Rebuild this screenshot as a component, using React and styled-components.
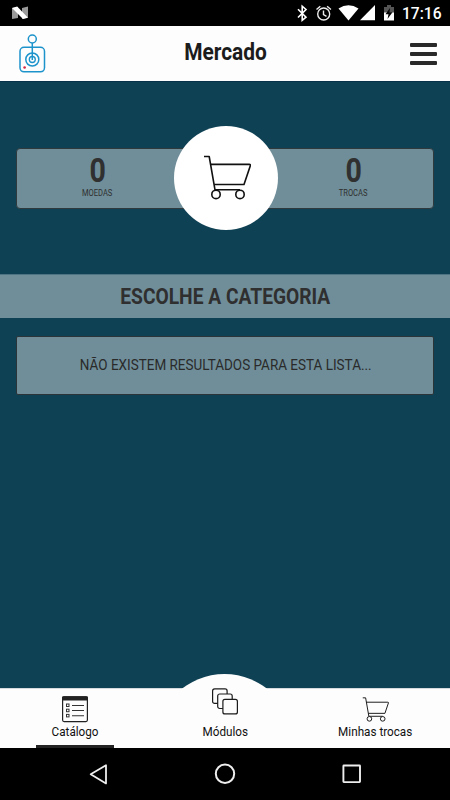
import React from "react";
import styled, { createGlobalStyle } from "styled-components";

const GlobalStyle = createGlobalStyle`
  * {
    box-sizing: border-box;
  }
  body {
    margin: 0;
    background: #0f4154;
    font-family: Roboto, "Liberation Sans", sans-serif;
  }
`;

const App = () => {
  return (
    <>
      <GlobalStyle />
      <Screen>
        <StatusBar>
          <NougatIcon />
          <StatusIcons />
          <Clock>17:16</Clock>
        </StatusBar>
        <Header>
          <LogoBox>
            <Logo />
          </LogoBox>
          <Title>
            <Condensed $scale={0.87}>Mercado</Condensed>
          </Title>
          <MenuButton aria-label="Menu">
            <MenuLine />
            <MenuLine />
            <MenuLine />
          </MenuButton>
        </Header>
        <Content>
          <Summary>
            <Stat>
              <StatValue>
                <Condensed $scale={0.84}>0</Condensed>
              </StatValue>
              <StatLabel>
                <Condensed $scale={0.84}>MOEDAS</Condensed>
              </StatLabel>
            </Stat>
            <Stat>
              <StatValue>
                <Condensed $scale={0.84}>0</Condensed>
              </StatValue>
              <StatLabel>
                <Condensed $scale={0.84}>TROCAS</Condensed>
              </StatLabel>
            </Stat>
            <CartCircle>
              <CartIcon width="48" height="46" stroke={1.6} />
            </CartCircle>
          </Summary>
          <SectionTitle>
            <Condensed $scale={0.873}>ESCOLHE A CATEGORIA</Condensed>
          </SectionTitle>
          <EmptyList>
            <Condensed $scale={0.87}>
              NÃO EXISTEM RESULTADOS PARA ESTA LISTA...
            </Condensed>
          </EmptyList>
        </Content>
        <TabBar>
          <Bump />
          <Tab $active>
            <TabIcon $top={7}>
              <CatalogIcon />
            </TabIcon>
            <Condensed $scale={0.9}>Catálogo</Condensed>
          </Tab>
          <Tab>
            <TabIcon $top={-1}>
              <ModulesIcon />
            </TabIcon>
            <Condensed $scale={0.9}>Módulos</Condensed>
          </Tab>
          <Tab>
            <TabIcon $top={8}>
              <CartIcon width="27" height="25.5" stroke={1.7} />
            </TabIcon>
            <Condensed $scale={0.9}>Minhas trocas</Condensed>
          </Tab>
        </TabBar>
        <SystemNav>
          <SystemIcons />
        </SystemNav>
      </Screen>
    </>
  );
};

const NougatIcon = () => (
  <svg width="18" height="14" viewBox="0 0 18 14">
    <path d="M1 2L7 1v11L1 13z" fill="#999" />
    <path d="M11 2L17 .500v11L11 13z" fill="#999" />
    <path d="M1 2L6.200 .500 17 11.800 12 13z" fill="#fff" />
  </svg>
);

const StatusIcons = () => (
  <svg width="106" height="26" viewBox="296 0 106 26">
    <path
      d="M298 9.2l8 8-3.8 3.2V6.2l3.8 3.3-8 8"
      fill="none"
      stroke="#fff"
      strokeWidth="1.6"
    />
    <g fill="none" stroke="#eee" strokeWidth="1.4">
      <circle cx="323.7" cy="14" r="6" />
      <path d="M323.5 10.5v4l3 1.8M316.5 9.5l3.8-3.3M327.1 6.2l3.8 3.3" />
    </g>
    <path d="M338.5 8.5Q348.5 2 358.5 8.5L348.5 20.5z" fill="#fff" />
    <path d="M375 5v15.3h-15z" fill="#fff" />
    <path d="M387 5h4v2h3v6h-10V7h3z" fill="#555" />
    <path d="M384 12.5h10v8h-10z" fill="#fff" />
    <path d="M390 8l-4.5 6.2h3L387.5 19l5-6.7h-3z" fill="#000" />
  </svg>
);

const Logo = () => (
  <svg width="28" height="40" viewBox="0 0 28 40" fill="none" stroke="#1c93cb">
    <circle cx="14.3" cy="5" r="4" strokeWidth="1.5" />
    <rect x="2" y="13.3" width="24.5" height="24.5" rx="4" strokeWidth="1.5" />
    <circle cx="14.3" cy="25.5" r="6.5" strokeWidth="1.5" />
    <circle cx="14.3" cy="25.5" r="3" strokeWidth="1.3" />
    <path d="M14.3 9v17" strokeWidth="1.5" />
    <circle cx="6.6" cy="33.5" r="1.3" fill="#d32645" stroke="none" />
  </svg>
);

const CartIcon = ({ width, height, stroke }) => (
  <svg
    width={width}
    height={height}
    viewBox="0 0 48 46"
    fill="none"
    stroke="#111"
    strokeWidth={stroke}
    strokeLinejoin="round"
  >
    <path d="M1 1.5h5.2l5.8 33.3h25" />
    <path d="M7.5 9.4H46.3c1 0 1.3.6 1 1.4L41 29.5H11.2" />
    <circle cx="13" cy="39.4" r="4.2" fill="#fdfdfd" />
    <circle cx="37" cy="39.4" r="4.2" fill="#fdfdfd" />
  </svg>
);

const CatalogIcon = () => (
  <svg width="26" height="27" viewBox="0 0 26 27" fill="none" stroke="#222">
    <rect x=".6" y=".8" width="24.8" height="24.8" rx="1.5" strokeWidth="1.2" />
    <path d="M0 1.5Q0 .2 1.5.2h23Q26 .2 26 1.5V4.5H0z" fill="#222" stroke="none" />
    <g stroke="#333">
      <rect x="4.5" y="8" width="2.5" height="2.5" />
      <rect x="4.5" y="13.2" width="2.5" height="2.5" />
      <rect x="4.5" y="18.4" width="2.5" height="2.5" />
      <path d="M10 9.5h12M10 14.5h12M10 19.7h12" strokeWidth="1.1" />
    </g>
  </svg>
);

const ModulesIcon = () => (
  <svg width="26" height="27" viewBox="0 0 26 27" fill="#fdfdfd" stroke="#1b1b1b">
    <rect x=".6" y=".9" width="14.5" height="14.5" rx="2" strokeWidth="1.2" />
    <rect x="5.7" y="6" width="14.5" height="14.5" rx="2" strokeWidth="1.2" />
    <rect x="10.9" y="11.4" width="14.5" height="14.5" rx="2" strokeWidth="1.2" />
  </svg>
);

const SystemIcons = () => (
  <svg width="450" height="52" viewBox="0 0 450 52" fill="none" stroke="#eee">
    <path d="M106 17.2v18.2L90.7 26.3z" strokeWidth="1.8" strokeLinejoin="round" />
    <circle cx="225" cy="25.8" r="9.2" strokeWidth="2" />
    <rect x="343.4" y="17.5" width="16.6" height="16.6" rx=".5" strokeWidth="1.9" />
  </svg>
);

const Screen = styled.div`
  display: flex;
  flex-direction: column;
  width: 450px;
  height: 800px;
  overflow: hidden;
  background: #0f4154;
`;

const Condensed = styled.span`
  display: inline-block;
  white-space: nowrap;
  transform: scaleX(${(props) => props.$scale});
`;

const StatusBar = styled.div`
  display: flex;
  align-items: center;
  flex: none;
  height: 26px;
  padding-left: 11px;
  background: #000;

  svg:nth-child(2) {
    margin-left: auto;
  }
`;

const Clock = styled.div`
  width: 48px;
  font-size: 15.6px;
  font-weight: 500;
  line-height: 26px;
  padding-top: 1px;
  color: #fff;
`;

const Header = styled.header`
  display: flex;
  justify-content: space-between;
  flex: none;
  height: 55px;
  padding: 0 13px 0 10px;
  background: #fdfdfd;
`;

const LogoBox = styled.div`
  width: 44px;
  padding: 8px 0 0 8px;
`;

const Title = styled.h1`
  margin: 0;
  padding-left: 4px;
  font-size: 24px;
  line-height: 53px;
  font-weight: 700;
  color: #1c1c1c;
`;

const MenuButton = styled.button`
  display: flex;
  flex-direction: column;
  gap: 5px;
  width: 44px;
  padding: 17px 0 0 17px;
  border: 0;
  background: none;
`;

const MenuLine = styled.span`
  width: 27px;
  height: 4px;
  border-radius: 1px;
  background: #292929;
`;

const Content = styled.main`
  flex: 1;
  padding-top: 66px;
  border-top: 1px solid #07324a;
`;

const Summary = styled.section`
  position: relative;
  display: flex;
  justify-content: space-between;
  height: 61px;
  margin: 0 16px;
  border: 1px solid #2f3a3f;
  border-radius: 4px;
  background: #6f8e99;
`;

const Stat = styled.div`
  width: 160px;
  padding-top: 5px;
  text-align: center;
  color: #303030;
`;

const StatValue = styled.div`
  padding-left: 1px;
  font-size: 34px;
  line-height: 32px;
  font-weight: 700;
`;

const StatLabel = styled.div`
  font-size: 9px;
  line-height: 14px;
`;

const CartCircle = styled.div`
  position: absolute;
  top: -23px;
  left: 156.5px;
  display: flex;
  justify-content: center;
  align-items: center;
  width: 104px;
  height: 104px;
  padding-left: 2px;
  border-radius: 50%;
  background: #fff;
`;

const SectionTitle = styled.h2`
  height: 44px;
  margin: 65px 0 0;
  border-top: 1px solid #4c7482;
  font-size: 22px;
  line-height: 43px;
  font-weight: 700;
  text-align: center;
  color: #2f2f2f;
  background: #6f8e99;
`;

const EmptyList = styled.div`
  height: 59px;
  margin: 18px 16px 0;
  padding-left: 1px;
  border: 1px solid #2b3438;
  border-radius: 2px;
  font-size: 15.5px;
  line-height: 56px;
  font-weight: 400;
  text-align: center;
  color: #2a2a2a;
  background: #6f8e99;
`;

const TabBar = styled.nav`
  position: relative;
  display: flex;
  flex: none;
  height: 60px;
  background: #fdfdfd;
  border-top: 1px solid #d5dade;
`;

const Bump = styled.div`
  position: absolute;
  top: -15px;
  left: 156px;
  width: 137px;
  height: 16px;
  overflow: hidden;

  &::before {
    content: "";
    display: block;
    width: 137px;
    height: 137px;
    border-radius: 50%;
    background: #fdfdfd;
  }
`;

const Tab = styled.div`
  position: relative;
  display: flex;
  flex: 1;
  flex-direction: column;
  align-items: center;
  font-size: 13px;
  line-height: 16px;
  color: #111;

  &::after {
    content: "";
    display: ${(props) => (props.$active ? "block" : "none")};
    width: 78px;
    height: 3px;
    margin-top: auto;
    background: #232323;
  }
`;

const TabIcon = styled.div`
  height: 35px;

  svg {
    display: block;
    margin-top: ${(props) => props.$top}px;
  }
`;

const SystemNav = styled.div`
  flex: none;
  height: 52px;
  background: #000;
`;

export default App;
